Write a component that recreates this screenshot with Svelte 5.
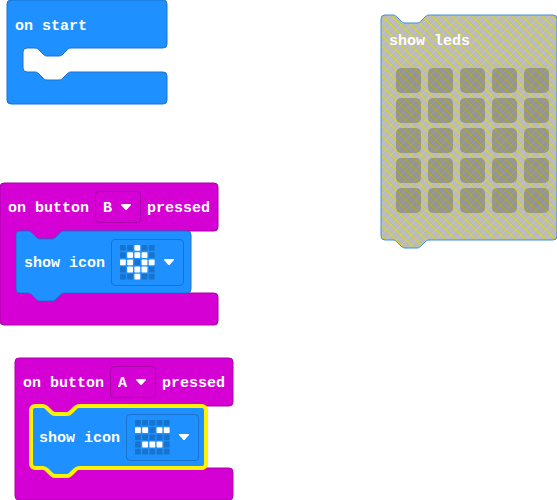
<script>
  const R = 'a 4 4 0 0 1';
  const notch = 'c 2,0 3,1 4,2 l 4,4 c 1,1 2,2 4,2 h 12 c 2,0 3,-1 4,-2 l 4,-4 c 1,-1 2,-2 4,-2';
  const notchBack = 'c -2,0 -3,1 -4,2 l -4,4 c -1,1 -2,2 -4,2 h -12 c -2,0 -3,-1 -4,-2 l -4,-4 c -1,-1 -2,-2 -4,-2';

  // Event block: header, an open mouth for statements, footer.
  const hatPath = (w, mouth) =>
    `M 0,4 ${R} 4,-4 H ${w - 4} ${R} 4,4 V 44 ${R} -4,4 H 64 ${notchBack} h -8 a 4 4 0 0 0 -4,4 ` +
    `v ${mouth - 8} a 4 4 0 0 0 4,4 h 8 ${notch} H ${w - 4} ${R} 4,4 v 24 ${R} -4,4 H 4 ${R} -4,-4 z`;

  // Statement block: notch on top, tab below.
  const statementPath = (w, h) =>
    `M 0,4 ${R} 4,-4 h 8 ${notch} H ${w - 4} ${R} 4,4 V ${h - 4} ${R} -4,4 H 48 ${notchBack} H 4 ${R} -4,-4 z`;

  const handlers = [
    { id: 'b', button: 'B', x: 0, y: 183, selected: false, name: 'small diamond', icon: '..#...###.##.##.###...#..' },
    { id: 'a', button: 'A', x: 15, y: 358, selected: true, name: 'happy', icon: '.....##.##......###......' }
  ];
  const leds = Array.from({ length: 25 }, (_, i) => i);
</script>

{#snippet arrow()}
  <svg class="arrow" width="12" height="8" viewBox="0 0 12 8" aria-hidden="true">
    <path d="M 2,1 H 10 Q 11.6,1 10.7,2.2 L 7,6.4 Q 6,7.4 5,6.4 L 1.3,2.2 Q 0.4,1 2,1 Z" />
  </svg>
{/snippet}

<main class="workspace">
  <section class="block start" style="left: 7px; top: 0px" aria-label="on start">
    <svg class="shape basic" aria-hidden="true"><path d={hatPath(160, 24)} /></svg>
    <div class="header"><span class="label">on start</span></div>
  </section>

  {#each handlers as h (h.id)}
    <section class="block event" style="left: {h.x}px; top: {h.y}px" aria-label="on button {h.button} pressed">
      <svg class="shape input" aria-hidden="true"><path d={hatPath(218, 62)} /></svg>
      <div class="header">
        <label class="label" for="button-{h.id}">on button</label>
        <span class="picker">
          <select id="button-{h.id}" value={h.button}>
            <option>A</option>
            <option>B</option>
            <option>A+B</option>
          </select>
          {@render arrow()}
        </span>
        <span class="label">pressed</span>
      </div>
      <div class="statement">
        <svg class="shape basic" class:selected={h.selected} aria-hidden="true">
          <path d={statementPath(175, 62)} />
        </svg>
        <span class="label">show icon</span>
        <button type="button" class="icon-field" aria-haspopup="listbox" aria-label="icon: {h.name}">
          <svg class="matrix" width="35" height="35" viewBox="0 0 36 36" aria-hidden="true">
            {#each h.icon.split('') as cell, i}
              <rect
                class:on={cell === '#'}
                x={(i % 5) * 7.4}
                y={Math.floor(i / 5) * 7.4}
                width="6"
                height="6"
                rx="0.8"
              />
            {/each}
          </svg>
          {@render arrow()}
        </button>
      </div>
    </section>
  {/each}

  <section class="block leds" style="left: 381px; top: 15px" aria-label="show leds">
    <svg class="shape disabled" aria-hidden="true">
      <defs>
        <pattern id="hatch" patternUnits="userSpaceOnUse" width="10" height="10">
          <rect width="10" height="10" fill="#bbbbbb" stroke="none" />
          <path d="M -1,-1 L 11,11 M 11,-1 L -1,11" stroke="#d6d630" />
        </pattern>
      </defs>
      <path d={statementPath(176, 225)} fill="url(#hatch)" stroke="#3f8fd8" />
    </svg>
    <div class="title">show leds</div>
    <div class="grid">
      {#each leds as i}
        <input type="checkbox" disabled aria-label="LED {(i % 5) + 1}, {Math.floor(i / 5) + 1}" />
      {/each}
    </div>
  </section>
</main>

<style>
  :global(body) {
    margin: 0;
    background: #fff;
  }
  .workspace {
    position: relative;
    min-height: 100vh;
    overflow: hidden;
    color: #fff;
    font: bold 15px/20px 'Liberation Mono', monospace;
  }
  .block {
    position: absolute;
    box-sizing: border-box;
    white-space: nowrap;
  }
  .start {
    padding-bottom: 56px;
  }
  .event {
    padding-bottom: 32px;
  }
  .shape {
    position: absolute;
    z-index: -1;
    left: 0;
    top: 0;
    width: 100%;
    height: 100%;
    overflow: visible;
  }
  .block,
  .statement {
    isolation: isolate;
  }
  .basic {
    fill: #1e90ff;
    stroke: #1873cc;
  }
  .input {
    fill: #d400d4;
    stroke: #aa00aa;
  }
  .selected {
    stroke: #fff200;
    stroke-width: 4px;
  }
  .header {
    display: flex;
    align-items: center;
    gap: 6px;
    height: 48px;
    padding: 0 8px;
  }
  .label {
    padding-top: 4px;
  }
  .start .label {
    padding-top: 6px;
  }
  .picker {
    position: relative;
    display: flex;
  }
  select,
  .icon-field {
    appearance: none;
    box-sizing: border-box;
    margin: 0;
    border: 1px solid #aa00aa;
    border-radius: 4px;
    background: transparent;
    color: inherit;
    font: inherit;
  }
  select {
    width: 46px;
    height: 32px;
    padding: 4px 7px 0;
  }
  option {
    color: #333;
  }
  .arrow {
    fill: #fff;
  }
  .picker .arrow {
    position: absolute;
    right: 9px;
    top: 12px;
    pointer-events: none;
  }
  .statement {
    position: relative;
    display: flex;
    align-items: center;
    gap: 6px;
    width: 175px;
    height: 62px;
    margin-left: 16px;
    padding-left: 8px;
    box-sizing: border-box;
  }
  .icon-field {
    display: flex;
    align-items: center;
    gap: 8px;
    height: 47px;
    padding: 0 8px;
    border-color: #1873cc;
  }
  .matrix {
    fill: #1873cc;
  }
  .on {
    fill: #fff;
  }
  .leds {
    width: 176px;
    padding: 17px 8px 26px;
  }
  .title {
    margin-bottom: 16px;
  }
  .grid {
    display: grid;
    grid-template-columns: repeat(5, 25px);
    gap: 5px 7px;
    margin-left: 7px;
  }
  .grid input {
    appearance: none;
    width: 25px;
    height: 25px;
    margin: 0;
    border-radius: 5px;
    background: rgba(0, 0, 0, 0.2);
  }
</style>
